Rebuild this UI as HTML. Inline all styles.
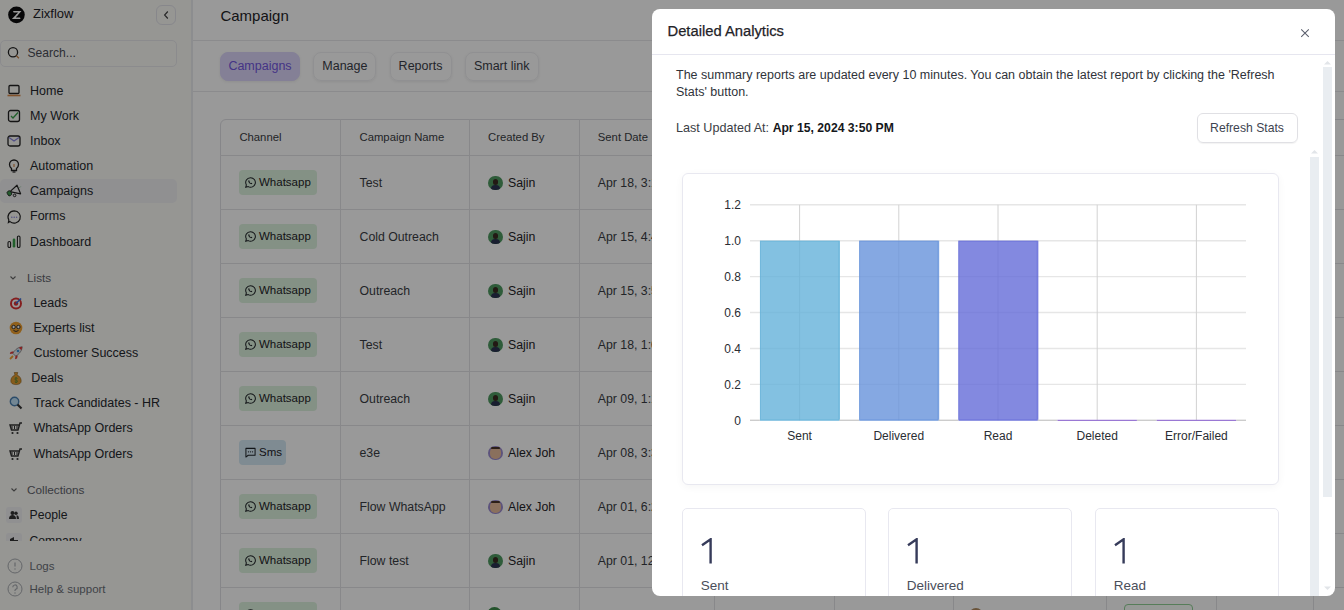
<!DOCTYPE html>
<html><head><meta charset="utf-8">
<style>
*{box-sizing:border-box;margin:0;padding:0}
html,body{width:1344px;height:610px;overflow:hidden;background:#fff;font-family:"Liberation Sans",sans-serif;color:#1f2328;position:relative}
.abs{position:absolute;white-space:nowrap}
#sidebar{position:absolute;left:0;top:0;width:193px;height:610px;background:#fafaf6;border-right:2px solid #eaecef;z-index:1}
.nav{position:absolute;left:0;height:24px;width:177px;font-size:12.5px;line-height:24px;color:#25282d}
.nav .t{position:absolute;left:30px;top:0}
.nav svg{position:absolute;left:7px;top:5px;overflow:visible}
#main{position:absolute;left:193px;top:0;width:1152px;height:610px;background:#fff}
.tab{position:absolute;top:52px;height:29px;border-radius:8px;border:1px solid #f0f0f3;font-size:12.5px;line-height:27px;text-align:center;color:#3a3d48;box-shadow:0 1px 3px rgba(0,0,0,.07)}
.hl{position:absolute;background:#e3e3e6}
.th{position:absolute;font-size:11.3px;color:#3a3d44}
.cell{position:absolute;font-size:12.3px;color:#3a3d44}
.badge{position:absolute;height:25px;border-radius:4px;background:#dcf2de;font-size:11.5px;line-height:25px;color:#1f2328}
#overlay{position:absolute;z-index:5;left:0;top:0;width:1344px;height:610px;background:rgba(0,0,0,.4)}
#modal{position:absolute;z-index:6;left:652px;top:9px;width:683px;height:587px;background:#fff;border-radius:8px;overflow:hidden}
</style></head><body>
<div id="sidebar">
<svg class="abs" style="left:4px;top:2px" width="26" height="26" viewBox="0 0 610 610"><circle cx="292" cy="302" r="195" fill="#0c0c0e"/><path d="M212 212H410L300 335 288 300 330 248H226z" fill="#fff"/><path d="M185 397H388L376 362H276L318 308 300 282z" fill="#fff"/></svg>
<div class="abs" style="left:33px;top:5px;font-size:13px;line-height:17px;color:#1f2328">Zixflow</div>
<div class="abs" style="left:156px;top:5px;width:20px;height:20px;border:1px solid #e2e2e8;border-radius:6px"></div>
<svg class="abs" style="left:162px;top:10px" width="9" height="10" viewBox="0 0 9 10"><path d="M5.8 1.5L2.6 5 5.8 8.5" stroke="#444" stroke-width="1.2" fill="none"/></svg>
<div class="abs" style="left:0;top:40px;width:177px;height:27px;border:1px solid #e8e8ec;border-radius:5px"></div>
<svg class="abs" style="left:7px;top:46px" width="14" height="14" viewBox="0 0 14 14"><circle cx="6" cy="6.2" r="4.6" stroke="#222" stroke-width="1.3" fill="none"/><path d="M9.3 9.6l2.6 2.6" stroke="#c47a3a" stroke-width="1.3"/></svg>
<div class="abs" style="left:27.5px;top:45px;font-size:12.1px;line-height:16px;color:#4a4d55">Search...</div>
<div class="abs" style="left:0;top:179px;width:177px;height:24px;border-radius:5px;background:#f0f0f2"></div>
<div class="nav" style="top:78.5px"><svg width="14" height="14" viewBox="0 0 14 14"><rect x="2" y="1.5" width="10" height="8" rx="1" stroke="#222" stroke-width="1.3" fill="none"/><path d="M0.5 11.5h13" stroke="#d98a4a" stroke-width="1.6"/></svg><span class="t">Home</span></div>
<div class="nav" style="top:103.5px"><svg width="14" height="14" viewBox="0 0 14 14"><rect x="1.5" y="1.5" width="11" height="11" rx="2" stroke="#222" stroke-width="1.3" fill="none"/><path d="M4 7l2 2 5-5.5" stroke="#3aa04a" stroke-width="1.3" fill="none"/></svg><span class="t">My Work</span></div>
<div class="nav" style="top:128.5px"><svg width="14" height="14" viewBox="0 0 14 14"><rect x="1" y="2" width="12" height="10" rx="2" stroke="#222" stroke-width="1.3" fill="none"/><path d="M2 3.5l5 3.5 5-3.5" stroke="#8a86e0" stroke-width="1.2" fill="none"/></svg><span class="t">Inbox</span></div>
<div class="nav" style="top:153.5px"><svg width="14" height="14" viewBox="0 0 14 14"><path d="M4.5 9.5C3 8.3 2.5 7 2.5 5.5a4.5 4.5 0 0 1 9 0c0 1.5-.5 2.8-2 4v2h-5z" stroke="#222" stroke-width="1.3" fill="none"/><path d="M5.5 13h3" stroke="#222" stroke-width="1.2"/><path d="M7 5v3" stroke="#d98a4a" stroke-width="1.2"/></svg><span class="t">Automation</span></div>
<div class="nav" style="top:178.5px"><svg width="14" height="14" viewBox="0 0 14 14"><path d="M3 7.6L10 1.2 13.6 9.8z" stroke="#222" stroke-width="1.2" fill="none" stroke-linejoin="round"/><rect x="0.4" y="6.8" width="4" height="5" rx="1.8" transform="rotate(-30 2.4 9.3)" fill="#3f9a4f" stroke="#222" stroke-width=".8"/><circle cx="7.6" cy="11.4" r="1.3" stroke="#222" stroke-width="1" fill="none"/><path d="M12.6 3.6l.9-.9" stroke="#3aa04a" stroke-width=".8"/></svg><span class="t">Campaigns</span></div>
<div class="nav" style="top:203.5px"><svg width="14" height="14" viewBox="0 0 14 14"><path d="M7.2 1.8a6.2 6.2 0 1 1-4.2 10.8L1.4 13.6 1.8 11A6.2 6.2 0 0 1 7.2 1.8z" stroke="#222" stroke-width="1.2" fill="none"/><circle cx="4.8" cy="8.2" r=".75" fill="#8a86e0"/><circle cx="7.2" cy="8.2" r=".75" fill="#8a86e0"/><circle cx="9.6" cy="8.2" r=".75" fill="#8a86e0"/></svg><span class="t">Forms</span></div>
<div class="nav" style="top:230px"><svg width="14" height="14" viewBox="0 0 14 14"><rect x="1" y="6.5" width="2.6" height="6" rx="1.3" stroke="#222" stroke-width="1.1" fill="none"/><rect x="5.7" y="3.5" width="2.6" height="9" rx="1.3" fill="#3aa04a"/><rect x="10.4" y="1" width="2.6" height="11.5" rx="1.3" stroke="#222" stroke-width="1.1" fill="none"/></svg><span class="t">Dashboard</span></div>
<svg class="abs" style="left:9px;top:274px" width="8" height="8" viewBox="0 0 8 8"><path d="M1.5 2.5L4 5l2.5-2.5" stroke="#666" stroke-width="1.1" fill="none"/></svg>
<div class="abs" style="left:27px;top:270px;font-size:11.75px;line-height:16px;color:#5f636b">Lists</div>
<div class="nav" style="top:290.5px"><svg style="left:9px" width="14" height="14" viewBox="0 0 14 14"><circle cx="7" cy="7.5" r="6" fill="#d33"/><circle cx="7" cy="7.5" r="4" fill="#fff"/><circle cx="7" cy="7.5" r="2.2" fill="#d33"/><path d="M7 7.5l5-5" stroke="#3a6fd8" stroke-width="1.6"/></svg><span class="t" style="left:33.4px">Leads</span></div>
<div class="nav" style="top:315.6px"><svg style="left:9px" width="14" height="14" viewBox="0 0 14 14"><circle cx="7" cy="7" r="6.3" fill="#f0a030"/><circle cx="4.6" cy="6" r="1.7" stroke="#333" stroke-width="1" fill="#fff"/><circle cx="9.4" cy="6" r="1.7" stroke="#333" stroke-width="1" fill="#fff"/><path d="M4.5 9.5q2.5 2 5 0" stroke="#333" stroke-width="1" fill="none"/></svg><span class="t" style="left:33.4px">Experts list</span></div>
<div class="nav" style="top:340.7px"><svg style="left:9px" width="14" height="14" viewBox="0 0 14 14"><path d="M13.2 0.8C10 1 7.5 2.5 5 5.5L4 7.5 6.5 10l2-1c3-2.5 4.5-5 4.7-8.2z" fill="#e4e8ee" stroke="#555" stroke-width=".6"/><path d="M13.2 0.8c-1.3.1-2.4.4-3.4.9l2.5 2.5c.5-1 .8-2.1.9-3.4z" fill="#e03a3a"/><circle cx="9" cy="5" r="1.3" fill="#3a8fd8"/><path d="M4.5 5.2L1.5 6 0.8 8 4 7.5zM8.8 9.5L8 12.5 6 13.2 6.5 10z" fill="#e03a3a"/><path d="M1 13l3-3" stroke="#f0a030" stroke-width="1.8"/></svg><span class="t" style="left:33.4px">Customer Success</span></div>
<div class="nav" style="top:365.7px"><svg style="left:9px" width="14" height="14" viewBox="0 0 14 14"><path d="M5.2 1.5h3.6L8 4c2.8 1 4.2 3.4 4.2 6 0 2.3-1.8 3.6-5.2 3.6S1.8 12.3 1.8 10c0-2.6 1.4-5 4.2-6z" fill="#e09a30" stroke="#7a5010" stroke-width=".5"/><path d="M7 6v6M8.5 7.5c-1-1-3-.5-2.5.8s2.8.8 2.5 2.2-2 1-2.7.3" stroke="#5b8a3a" stroke-width=".9" fill="none"/></svg><span class="t" style="left:31.2px">Deals</span></div>
<div class="nav" style="top:390.8px"><svg style="left:9px" width="14" height="14" viewBox="0 0 14 14"><circle cx="5.5" cy="5.5" r="4.2" fill="#bfe0f5" stroke="#4a7fb0" stroke-width="1.4"/><path d="M8.5 8.5l4 4" stroke="#333" stroke-width="2.2"/></svg><span class="t" style="left:33.4px">Track Candidates - HR</span></div>
<div class="nav" style="top:416.4px"><svg style="left:9px" width="14" height="14" viewBox="0 0 14 14"><g transform="translate(14 0) scale(-1 1)"><path d="M1 2h2l2 7h6.5l1.5-5H4" stroke="#333" stroke-width="1.4" fill="none"/><path d="M6 5v3M8.5 5v3M11 5v3" stroke="#333" stroke-width="1"/><circle cx="5.5" cy="12" r="1.1" fill="#333"/><circle cx="10.5" cy="12" r="1.1" fill="#333"/></g></svg><span class="t" style="left:33.4px">WhatsApp Orders</span></div>
<div class="nav" style="top:441.5px"><svg style="left:9px" width="14" height="14" viewBox="0 0 14 14"><g transform="translate(14 0) scale(-1 1)"><path d="M1 2h2l2 7h6.5l1.5-5H4" stroke="#333" stroke-width="1.4" fill="none"/><path d="M6 5v3M8.5 5v3M11 5v3" stroke="#333" stroke-width="1"/><circle cx="5.5" cy="12" r="1.1" fill="#333"/><circle cx="10.5" cy="12" r="1.1" fill="#333"/></g></svg><span class="t" style="left:33.4px">WhatsApp Orders</span></div>
<svg class="abs" style="left:10px;top:486px" width="8" height="8" viewBox="0 0 8 8"><path d="M1.5 2.5L4 5l2.5-2.5" stroke="#666" stroke-width="1.1" fill="none"/></svg>
<div class="abs" style="left:27px;top:482px;font-size:11.75px;line-height:16px;color:#5f636b">Collections</div>
<div class="abs" style="left:0;top:500px;width:192px;height:41px;overflow:hidden">
 <div class="abs" style="left:6px;top:7px;width:16px;height:16px;border-radius:3px;background:#f0f0f2"></div>
 <svg class="abs" style="left:9px;top:10px" width="10" height="10" viewBox="0 0 10 10"><circle cx="3.5" cy="3" r="2" fill="#333"/><circle cx="7" cy="3.3" r="1.7" fill="#333"/><path d="M0 9c0-3 1.5-4 3.5-4s3.5 1 3.5 4zM7.5 5.2c1.5 0 2.5 1 2.5 3.8H7.8z" fill="#333"/></svg>
 <div class="abs" style="left:29.5px;top:7px;font-size:12.2px;line-height:17px;color:#25282d">People</div>
 <div class="abs" style="left:6px;top:33px;width:16px;height:16px;border-radius:3px;background:#f0f0f2"></div>
 <svg class="abs" style="left:9px;top:36px" width="10" height="10" viewBox="0 0 10 10"><path d="M1 10V3l4-2v9zM5 4h4v6H5z" fill="#333"/></svg>
 <div class="abs" style="left:29.5px;top:33px;font-size:12.2px;line-height:17px;color:#25282d">Company</div>
</div>
<svg class="abs" style="left:7px;top:558px" width="16" height="16" viewBox="0 0 16 16"><circle cx="8" cy="8" r="7" stroke="#a8abb0" stroke-width="1" fill="none"/><path d="M8 4.5v4" stroke="#a8abb0" stroke-width="1.2"/><circle cx="8" cy="11" r=".7" fill="#a8abb0"/></svg>
<div class="abs" style="left:29.5px;top:558px;font-size:11.5px;line-height:16px;color:#6b6f76">Logs</div>
<svg class="abs" style="left:7px;top:581px" width="16" height="16" viewBox="0 0 16 16"><circle cx="8" cy="8" r="7" stroke="#a8abb0" stroke-width="1" fill="none"/><path d="M5.8 6.2a2.2 2.2 0 1 1 3 2c-.6.3-.8.6-.8 1.3v.5" stroke="#a8abb0" stroke-width="1.2" fill="none"/><circle cx="8" cy="12" r=".7" fill="#a8abb0"/></svg>
<div class="abs" style="left:29.5px;top:581px;font-size:11.5px;line-height:16px;color:#6b6f76">Help &amp; support</div>
</div>
<div id="main">
<div class="abs" style="left:27.400000000000006px;top:7px;font-size:15px;line-height:18px;color:#1f2328">Campaign</div>
<div class="abs" style="left:0;top:40px;width:1152px;height:1px;background:#e8e8ec"></div>
<div class="tab" style="left:27px;width:80px;background:#dcd6fb;border-color:#dcd6fb;color:#7357e0">Campaigns</div>
<div class="tab" style="left:120.39999999999998px;width:63px">Manage</div>
<div class="tab" style="left:196.5px;width:62px">Reports</div>
<div class="tab" style="left:271.7px;width:74px">Smart link</div>
<div class="abs" style="left:0;top:91px;width:1152px;height:1px;background:#e8e8ec"></div>
<div class="abs" style="left:27px;top:119px;width:1200px;height:560px;border:1px solid #e0e0e4;border-radius:6px"></div><div class="hl" style="left:147px;top:119px;width:1px;height:500px"></div><div class="hl" style="left:276px;top:119px;width:1px;height:500px"></div><div class="hl" style="left:386px;top:119px;width:1px;height:500px"></div><div class="hl" style="left:521px;top:119px;width:1px;height:500px"></div><div class="hl" style="left:641px;top:119px;width:1px;height:500px"></div><div class="hl" style="left:760px;top:119px;width:1px;height:500px"></div><div class="hl" style="left:913px;top:119px;width:1px;height:500px"></div><div class="hl" style="left:1023px;top:119px;width:1px;height:500px"></div><div class="hl" style="left:1120px;top:119px;width:1px;height:500px"></div><div class="hl" style="left:27px;top:155px;width:1200px;height:1px"></div><div class="hl" style="left:27px;top:209px;width:1200px;height:1px"></div><div class="hl" style="left:27px;top:263px;width:1200px;height:1px"></div><div class="hl" style="left:27px;top:317px;width:1200px;height:1px"></div><div class="hl" style="left:27px;top:371px;width:1200px;height:1px"></div><div class="hl" style="left:27px;top:425px;width:1200px;height:1px"></div><div class="hl" style="left:27px;top:479px;width:1200px;height:1px"></div><div class="hl" style="left:27px;top:533px;width:1200px;height:1px"></div><div class="hl" style="left:27px;top:587px;width:1200px;height:1px"></div><div class="th abs" style="left:46.400000000000006px;top:129px;line-height:16px">Channel</div><div class="th abs" style="left:166.5px;top:129px;line-height:16px">Campaign Name</div><div class="th abs" style="left:295px;top:129px;line-height:16px">Created By</div><div class="th abs" style="left:404.79999999999995px;top:129px;line-height:16px">Sent Date</div><div class="badge abs" style="left:46px;top:170px;width:78px"><svg class="abs" style="left:6px;top:7px" width="11" height="11" viewBox="0 0 12 12"><path d="M6 .8a5.2 5.2 0 0 0-4.5 7.8L.8 11.2l2.7-.7A5.2 5.2 0 1 0 6 .8z" stroke="#1f2328" stroke-width="1.1" fill="none"/><path d="M4 3.6c-.3.2-.6.7-.3 1.5.4 1 1.5 2.2 2.8 2.6.6.2 1.1 0 1.4-.4l-.1-.6-1-.4-.5.4c-.6-.2-1.2-.8-1.5-1.4l.4-.5-.4-1z" fill="#1f2328"/></svg><span class="abs" style="left:20px;top:0">Whatsapp</span></div><div class="cell abs" style="left:166.5px;top:175px;line-height:16px">Test</div><div class="abs" style="left:295px;top:175.7px;width:14.5px;height:14.5px;border-radius:8px;background:#4f9a62;overflow:hidden"><div class="abs" style="left:4.5px;top:3px;width:5.5px;height:6px;border-radius:3px;background:#3a2a22"></div><div class="abs" style="left:2.5px;top:9px;width:9.5px;height:8px;border-radius:4px;background:#2a3350"></div></div><div class="cell abs" style="left:315px;top:175.3px;line-height:16px;color:#1f2328">Sajin</div><div class="cell abs" style="left:404.79999999999995px;top:175px;line-height:16px">Apr 18, 3:1</div><div class="badge abs" style="left:46px;top:224px;width:78px"><svg class="abs" style="left:6px;top:7px" width="11" height="11" viewBox="0 0 12 12"><path d="M6 .8a5.2 5.2 0 0 0-4.5 7.8L.8 11.2l2.7-.7A5.2 5.2 0 1 0 6 .8z" stroke="#1f2328" stroke-width="1.1" fill="none"/><path d="M4 3.6c-.3.2-.6.7-.3 1.5.4 1 1.5 2.2 2.8 2.6.6.2 1.1 0 1.4-.4l-.1-.6-1-.4-.5.4c-.6-.2-1.2-.8-1.5-1.4l.4-.5-.4-1z" fill="#1f2328"/></svg><span class="abs" style="left:20px;top:0">Whatsapp</span></div><div class="cell abs" style="left:166.5px;top:229px;line-height:16px">Cold Outreach</div><div class="abs" style="left:295px;top:229.7px;width:14.5px;height:14.5px;border-radius:8px;background:#4f9a62;overflow:hidden"><div class="abs" style="left:4.5px;top:3px;width:5.5px;height:6px;border-radius:3px;background:#3a2a22"></div><div class="abs" style="left:2.5px;top:9px;width:9.5px;height:8px;border-radius:4px;background:#2a3350"></div></div><div class="cell abs" style="left:315px;top:229.3px;line-height:16px;color:#1f2328">Sajin</div><div class="cell abs" style="left:404.79999999999995px;top:229px;line-height:16px">Apr 15, 4:4</div><div class="badge abs" style="left:46px;top:278px;width:78px"><svg class="abs" style="left:6px;top:7px" width="11" height="11" viewBox="0 0 12 12"><path d="M6 .8a5.2 5.2 0 0 0-4.5 7.8L.8 11.2l2.7-.7A5.2 5.2 0 1 0 6 .8z" stroke="#1f2328" stroke-width="1.1" fill="none"/><path d="M4 3.6c-.3.2-.6.7-.3 1.5.4 1 1.5 2.2 2.8 2.6.6.2 1.1 0 1.4-.4l-.1-.6-1-.4-.5.4c-.6-.2-1.2-.8-1.5-1.4l.4-.5-.4-1z" fill="#1f2328"/></svg><span class="abs" style="left:20px;top:0">Whatsapp</span></div><div class="cell abs" style="left:166.5px;top:283px;line-height:16px">Outreach</div><div class="abs" style="left:295px;top:283.7px;width:14.5px;height:14.5px;border-radius:8px;background:#4f9a62;overflow:hidden"><div class="abs" style="left:4.5px;top:3px;width:5.5px;height:6px;border-radius:3px;background:#3a2a22"></div><div class="abs" style="left:2.5px;top:9px;width:9.5px;height:8px;border-radius:4px;background:#2a3350"></div></div><div class="cell abs" style="left:315px;top:283.3px;line-height:16px;color:#1f2328">Sajin</div><div class="cell abs" style="left:404.79999999999995px;top:283px;line-height:16px">Apr 15, 3:5</div><div class="badge abs" style="left:46px;top:332px;width:78px"><svg class="abs" style="left:6px;top:7px" width="11" height="11" viewBox="0 0 12 12"><path d="M6 .8a5.2 5.2 0 0 0-4.5 7.8L.8 11.2l2.7-.7A5.2 5.2 0 1 0 6 .8z" stroke="#1f2328" stroke-width="1.1" fill="none"/><path d="M4 3.6c-.3.2-.6.7-.3 1.5.4 1 1.5 2.2 2.8 2.6.6.2 1.1 0 1.4-.4l-.1-.6-1-.4-.5.4c-.6-.2-1.2-.8-1.5-1.4l.4-.5-.4-1z" fill="#1f2328"/></svg><span class="abs" style="left:20px;top:0">Whatsapp</span></div><div class="cell abs" style="left:166.5px;top:337px;line-height:16px">Test</div><div class="abs" style="left:295px;top:337.7px;width:14.5px;height:14.5px;border-radius:8px;background:#4f9a62;overflow:hidden"><div class="abs" style="left:4.5px;top:3px;width:5.5px;height:6px;border-radius:3px;background:#3a2a22"></div><div class="abs" style="left:2.5px;top:9px;width:9.5px;height:8px;border-radius:4px;background:#2a3350"></div></div><div class="cell abs" style="left:315px;top:337.3px;line-height:16px;color:#1f2328">Sajin</div><div class="cell abs" style="left:404.79999999999995px;top:337px;line-height:16px">Apr 18, 1:0</div><div class="badge abs" style="left:46px;top:386px;width:78px"><svg class="abs" style="left:6px;top:7px" width="11" height="11" viewBox="0 0 12 12"><path d="M6 .8a5.2 5.2 0 0 0-4.5 7.8L.8 11.2l2.7-.7A5.2 5.2 0 1 0 6 .8z" stroke="#1f2328" stroke-width="1.1" fill="none"/><path d="M4 3.6c-.3.2-.6.7-.3 1.5.4 1 1.5 2.2 2.8 2.6.6.2 1.1 0 1.4-.4l-.1-.6-1-.4-.5.4c-.6-.2-1.2-.8-1.5-1.4l.4-.5-.4-1z" fill="#1f2328"/></svg><span class="abs" style="left:20px;top:0">Whatsapp</span></div><div class="cell abs" style="left:166.5px;top:391px;line-height:16px">Outreach</div><div class="abs" style="left:295px;top:391.7px;width:14.5px;height:14.5px;border-radius:8px;background:#4f9a62;overflow:hidden"><div class="abs" style="left:4.5px;top:3px;width:5.5px;height:6px;border-radius:3px;background:#3a2a22"></div><div class="abs" style="left:2.5px;top:9px;width:9.5px;height:8px;border-radius:4px;background:#2a3350"></div></div><div class="cell abs" style="left:315px;top:391.3px;line-height:16px;color:#1f2328">Sajin</div><div class="cell abs" style="left:404.79999999999995px;top:391px;line-height:16px">Apr 09, 1:1</div><div class="badge abs" style="left:46px;top:440px;width:47px;background:#d4e8f4"><svg class="abs" style="left:6px;top:7px" width="11" height="11" viewBox="0 0 12 12"><path d="M1 1.5h10v7.5H3.5L1 11z" stroke="#1f2328" stroke-width="1.1" fill="none" stroke-linejoin="round"/><circle cx="3.8" cy="5.2" r=".7" fill="#1f2328"/><circle cx="6" cy="5.2" r=".7" fill="#1f2328"/><circle cx="8.2" cy="5.2" r=".7" fill="#1f2328"/></svg><span class="abs" style="left:20px;top:0">Sms</span></div><div class="cell abs" style="left:166.5px;top:445px;line-height:16px">e3e</div><div class="abs" style="left:295px;top:445.7px;width:14.5px;height:14.5px;border-radius:8px;background:#9a8ad0;overflow:hidden"><div class="abs" style="left:2px;top:1.5px;width:10.5px;height:12px;border-radius:5px;background:#e6bb9c"></div><div class="abs" style="left:3px;top:1px;width:8.5px;height:2.8px;border-radius:4px 4px 2px 2px;background:#4a3428"></div></div><div class="cell abs" style="left:315px;top:445.3px;line-height:16px;color:#1f2328">Alex Joh</div><div class="cell abs" style="left:404.79999999999995px;top:445px;line-height:16px">Apr 08, 3:3</div><div class="badge abs" style="left:46px;top:494px;width:78px"><svg class="abs" style="left:6px;top:7px" width="11" height="11" viewBox="0 0 12 12"><path d="M6 .8a5.2 5.2 0 0 0-4.5 7.8L.8 11.2l2.7-.7A5.2 5.2 0 1 0 6 .8z" stroke="#1f2328" stroke-width="1.1" fill="none"/><path d="M4 3.6c-.3.2-.6.7-.3 1.5.4 1 1.5 2.2 2.8 2.6.6.2 1.1 0 1.4-.4l-.1-.6-1-.4-.5.4c-.6-.2-1.2-.8-1.5-1.4l.4-.5-.4-1z" fill="#1f2328"/></svg><span class="abs" style="left:20px;top:0">Whatsapp</span></div><div class="cell abs" style="left:166.5px;top:499px;line-height:16px">Flow WhatsApp</div><div class="abs" style="left:295px;top:499.7px;width:14.5px;height:14.5px;border-radius:8px;background:#9a8ad0;overflow:hidden"><div class="abs" style="left:2px;top:1.5px;width:10.5px;height:12px;border-radius:5px;background:#e6bb9c"></div><div class="abs" style="left:3px;top:1px;width:8.5px;height:2.8px;border-radius:4px 4px 2px 2px;background:#4a3428"></div></div><div class="cell abs" style="left:315px;top:499.3px;line-height:16px;color:#1f2328">Alex Joh</div><div class="cell abs" style="left:404.79999999999995px;top:499px;line-height:16px">Apr 01, 6:2</div><div class="badge abs" style="left:46px;top:548px;width:78px"><svg class="abs" style="left:6px;top:7px" width="11" height="11" viewBox="0 0 12 12"><path d="M6 .8a5.2 5.2 0 0 0-4.5 7.8L.8 11.2l2.7-.7A5.2 5.2 0 1 0 6 .8z" stroke="#1f2328" stroke-width="1.1" fill="none"/><path d="M4 3.6c-.3.2-.6.7-.3 1.5.4 1 1.5 2.2 2.8 2.6.6.2 1.1 0 1.4-.4l-.1-.6-1-.4-.5.4c-.6-.2-1.2-.8-1.5-1.4l.4-.5-.4-1z" fill="#1f2328"/></svg><span class="abs" style="left:20px;top:0">Whatsapp</span></div><div class="cell abs" style="left:166.5px;top:553px;line-height:16px">Flow test</div><div class="abs" style="left:295px;top:553.7px;width:14.5px;height:14.5px;border-radius:8px;background:#4f9a62;overflow:hidden"><div class="abs" style="left:4.5px;top:3px;width:5.5px;height:6px;border-radius:3px;background:#3a2a22"></div><div class="abs" style="left:2.5px;top:9px;width:9.5px;height:8px;border-radius:4px;background:#2a3350"></div></div><div class="cell abs" style="left:315px;top:553.3px;line-height:16px;color:#1f2328">Sajin</div><div class="cell abs" style="left:404.79999999999995px;top:553px;line-height:16px">Apr 01, 12</div><div class="badge abs" style="left:46px;top:602px;width:78px"><svg class="abs" style="left:6px;top:7px" width="11" height="11" viewBox="0 0 12 12"><path d="M6 .8a5.2 5.2 0 0 0-4.5 7.8L.8 11.2l2.7-.7A5.2 5.2 0 1 0 6 .8z" stroke="#1f2328" stroke-width="1.1" fill="none"/><path d="M4 3.6c-.3.2-.6.7-.3 1.5.4 1 1.5 2.2 2.8 2.6.6.2 1.1 0 1.4-.4l-.1-.6-1-.4-.5.4c-.6-.2-1.2-.8-1.5-1.4l.4-.5-.4-1z" fill="#1f2328"/></svg><span class="abs" style="left:20px;top:0">Whatsapp</span></div><div class="badge abs" style="left:931px;top:604px;width:69px;background:#fbfffb;border:1px solid #8fd095"></div><div class="abs" style="left:294px;top:607px;width:15px;height:15px;border-radius:8px;background:#3c8a4a"></div><div class="abs" style="left:776px;top:608px;width:14px;height:14px;border-radius:7px;background:#b08a60"></div></div>
<div id="overlay"></div>
<div id="modal"><div class="abs" style="left:15.5px;top:13px;font-size:14.75px;line-height:18px;color:#1f2328;-webkit-text-stroke:0.25px #1f2328">Detailed Analytics</div><svg class="abs" style="left:648px;top:19px" width="10" height="10" viewBox="0 0 10 10"><path d="M1.2 1.4l7.6 7.4M8.8 1.4L1.2 8.8" stroke="#5a5e6c" stroke-width="1.05"/></svg><div class="abs" style="left:0;top:45px;width:683px;height:1px;background:#e6e6ef"></div><div class="abs" style="left:24px;top:58px;font-size:12.5px;line-height:17px;color:#2f333a">The summary reports are updated every 10 minutes. You can obtain the latest report by clicking the 'Refresh<br>Stats' button.</div><div class="abs" style="left:24px;top:111px;font-size:12.6px;line-height:17px;color:#3a3d44">Last Updated At: <b style="color:#15171b;font-size:12.2px">Apr 15, 2024 3:50 PM</b></div><div class="abs" style="left:544.5px;top:103.8px;width:101px;height:30.5px;border:1px solid #e0e0e4;border-radius:6px;box-shadow:0 1px 1px rgba(0,0,0,.05);font-size:12.2px;line-height:28.5px;text-align:center;color:#40444f">Refresh Stats</div><div class="abs" style="left:671px;top:58px;width:9px;height:430px;background:#e9edf1"></div><svg class="abs" style="left:672px;top:51px" width="7" height="5" viewBox="0 0 7 5"><path d="M0 4.5L3.5 1 7 4.5z" fill="#e2e5e9"/></svg><svg class="abs" style="left:672px;top:577px" width="7" height="5" viewBox="0 0 7 5"><path d="M0 .5L3.5 4 7 .5z" fill="#e2e5e9"/></svg><div class="abs" style="left:658px;top:148.3px;width:9px;height:460px;background:#e9edf1"></div><svg class="abs" style="left:659px;top:140px" width="7" height="5" viewBox="0 0 7 5"><path d="M0 4.5L3.5 1 7 4.5z" fill="#e2e5e9"/></svg><div class="abs" style="left:29.5px;top:164px;width:597px;height:312px;border:1px solid #e8e8f0;border-radius:6px;box-shadow:0 2px 8px rgba(0,0,0,.04)"></div><svg class="abs" style="left:0;top:0" width="683" height="587" viewBox="652 9 683 587"><line x1="750" y1="204.78" x2="1246" y2="204.78" stroke="#e6e6e6" stroke-width="1.4"/><text x="741" y="208.98" text-anchor="end" font-family="Liberation Sans" font-size="12" fill="#2a2d33">1.2</text><line x1="750" y1="240.70" x2="1246" y2="240.70" stroke="#e6e6e6" stroke-width="1.4"/><text x="741" y="244.90" text-anchor="end" font-family="Liberation Sans" font-size="12" fill="#2a2d33">1.0</text><line x1="750" y1="276.62" x2="1246" y2="276.62" stroke="#e6e6e6" stroke-width="1.4"/><text x="741" y="280.82" text-anchor="end" font-family="Liberation Sans" font-size="12" fill="#2a2d33">0.8</text><line x1="750" y1="312.54" x2="1246" y2="312.54" stroke="#e6e6e6" stroke-width="1.4"/><text x="741" y="316.74" text-anchor="end" font-family="Liberation Sans" font-size="12" fill="#2a2d33">0.6</text><line x1="750" y1="348.46" x2="1246" y2="348.46" stroke="#e6e6e6" stroke-width="1.4"/><text x="741" y="352.66" text-anchor="end" font-family="Liberation Sans" font-size="12" fill="#2a2d33">0.4</text><line x1="750" y1="384.38" x2="1246" y2="384.38" stroke="#e6e6e6" stroke-width="1.4"/><text x="741" y="388.58" text-anchor="end" font-family="Liberation Sans" font-size="12" fill="#2a2d33">0.2</text><text x="741" y="424.50" text-anchor="end" font-family="Liberation Sans" font-size="12" fill="#2a2d33">0</text><line x1="799.60" y1="204.78" x2="799.60" y2="420.30" stroke="#d2d2d2" stroke-width="1"/><line x1="898.80" y1="204.78" x2="898.80" y2="420.30" stroke="#d2d2d2" stroke-width="1"/><line x1="998.00" y1="204.78" x2="998.00" y2="420.30" stroke="#d2d2d2" stroke-width="1"/><line x1="1097.20" y1="204.78" x2="1097.20" y2="420.30" stroke="#d2d2d2" stroke-width="1"/><line x1="1196.40" y1="204.78" x2="1196.40" y2="420.30" stroke="#d2d2d2" stroke-width="1"/><rect x="760.00" y="240.70" width="80" height="180.1" fill="#64b2d9" fill-opacity=".8"/><rect x="760.40" y="241.20" width="78.4" height="178.6" fill="none" stroke="#64b2d9" stroke-width="1" opacity=".6"/><text x="799.60" y="440" text-anchor="middle" font-family="Liberation Sans" font-size="12" fill="#2a2d33">Sent</text><rect x="859.20" y="240.70" width="80" height="180.1" fill="#6692db" fill-opacity=".8"/><rect x="859.60" y="241.20" width="78.4" height="178.6" fill="none" stroke="#6692db" stroke-width="1" opacity=".6"/><text x="898.80" y="440" text-anchor="middle" font-family="Liberation Sans" font-size="12" fill="#2a2d33">Delivered</text><rect x="958.40" y="240.70" width="80" height="180.1" fill="#646cd8" fill-opacity=".8"/><rect x="958.80" y="241.20" width="78.4" height="178.6" fill="none" stroke="#646cd8" stroke-width="1" opacity=".6"/><text x="998.00" y="440" text-anchor="middle" font-family="Liberation Sans" font-size="12" fill="#2a2d33">Read</text><text x="1097.20" y="440" text-anchor="middle" font-family="Liberation Sans" font-size="12" fill="#2a2d33">Deleted</text><text x="1196.40" y="440" text-anchor="middle" font-family="Liberation Sans" font-size="12" fill="#2a2d33">Error/Failed</text><line x1="750" y1="420.30" x2="759.90" y2="420.30" stroke="#cccccc" stroke-width="1.4"/><line x1="839.30" y1="420.30" x2="859.10" y2="420.30" stroke="#cccccc" stroke-width="1.4"/><line x1="938.50" y1="420.30" x2="958.30" y2="420.30" stroke="#cccccc" stroke-width="1.4"/><line x1="1037.70" y1="420.30" x2="1057.50" y2="420.30" stroke="#cccccc" stroke-width="1.4"/><line x1="1136.90" y1="420.30" x2="1156.70" y2="420.30" stroke="#cccccc" stroke-width="1.4"/><line x1="1236.10" y1="420.30" x2="1246.00" y2="420.30" stroke="#cccccc" stroke-width="1.4"/><line x1="1057.50" y1="420.30" x2="1136.90" y2="420.30" stroke="#9a78d4" stroke-width="1.3"/><line x1="1156.70" y1="420.30" x2="1236.10" y2="420.30" stroke="#9a78d4" stroke-width="1.3"/></svg><div class="abs" style="left:30px;top:499px;width:184px;height:120px;border:1px solid #e8e8f0;border-radius:5px"></div><svg class="abs" style="left:48.5px;top:529px" width="14" height="28" viewBox="0 0 14 28"><path d="M1 7.2L9.6 1.3V25.5" stroke="#363b5a" stroke-width="2.4" fill="none" stroke-linejoin="miter"/></svg><div class="abs" style="left:48.8px;top:568px;font-size:13.5px;line-height:17px;color:#4a4e5a">Sent</div><div class="abs" style="left:236px;top:499px;width:184px;height:120px;border:1px solid #e8e8f0;border-radius:5px"></div><svg class="abs" style="left:254.5px;top:529px" width="14" height="28" viewBox="0 0 14 28"><path d="M1 7.2L9.6 1.3V25.5" stroke="#363b5a" stroke-width="2.4" fill="none" stroke-linejoin="miter"/></svg><div class="abs" style="left:254.8px;top:568px;font-size:13.5px;line-height:17px;color:#4a4e5a">Delivered</div><div class="abs" style="left:443px;top:499px;width:184px;height:120px;border:1px solid #e8e8f0;border-radius:5px"></div><svg class="abs" style="left:461.5px;top:529px" width="14" height="28" viewBox="0 0 14 28"><path d="M1 7.2L9.6 1.3V25.5" stroke="#363b5a" stroke-width="2.4" fill="none" stroke-linejoin="miter"/></svg><div class="abs" style="left:461.8px;top:568px;font-size:13.5px;line-height:17px;color:#4a4e5a">Read</div></div>
</body></html>
